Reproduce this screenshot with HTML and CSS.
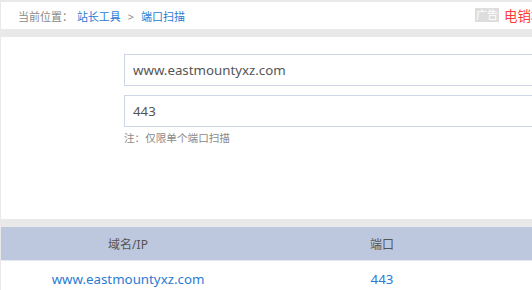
FILE: index.html
```html
<!DOCTYPE html>
<html lang="zh-CN">
  <head>
    <meta charset="UTF-8" />
    <meta name="viewport" content="width=device-width, initial-scale=1.0" />
    <title>端口扫描</title>
    <link rel="stylesheet" href="styles.css">
  </head>

  <body>
    <div class="top-bar">
      <div class="crumbs">
        <span class="crumb-label">当前位置：</span>
        <a href="#">站长工具</a>
        <span class="crumb-sep">&gt;</span>
        <a href="#">端口扫描</a>
      </div>
      <div class="ad">
        <span class="ad-tag">广告</span>
        <a href="#" class="ad-link">电销机</a>
      </div>
    </div>

    <div class="scan-panel">
      <input class="field" type="text" value="www.eastmountyxz.com">
      <input class="field" type="text" value="443">
      <p class="note">注：仅限单个端口扫描</p>
    </div>

    <div class="result">
      <table>
        <thead>
          <tr>
            <th>域名/IP</th>
            <th>端口</th>
            <th></th>
          </tr>
        </thead>
        <tbody>
          <tr>
            <td><a href="#">www.eastmountyxz.com</a></td>
            <td><a href="#">443</a></td>
            <td></td>
          </tr>
        </tbody>
      </table>
    </div>
  </body>
</html>
```

FILE: styles.css
```css
body {
  margin: 0;
  background-color: #e9e9e9;
  font-family: "Noto Sans", "Noto Sans CJK SC", sans-serif;
  overflow: hidden;
}

a {
  color: #2b7bd2;
  text-decoration: none;
}

.top-bar {
  display: flex;
  justify-content: space-between;
  align-items: center;
  height: 27px;
  margin: 2px 0 8px 1px;
  background-color: #fff;
  font-size: 11px;
  white-space: nowrap;
}

.crumbs {
  padding-left: 17px;
  color: #8a8a8a;
}

.crumb-label {
  margin-right: 1px;
}

.crumb-sep {
  margin: 0 4px;
}

.ad {
  display: flex;
  align-items: center;
  gap: 5px;
  width: 57px;
  overflow: hidden;
  flex-shrink: 0;
  margin-top: -1px;
}

.ad-tag {
  padding: 1px 1px;
  background-color: #dddddd;
  color: #fff;
  font-size: 11px;
  line-height: 12px;
}

.ad-link {
  color: #ff3b3b;
  font-size: 13.5px;
}

.scan-panel {
  height: 165px;
  margin-left: 1px;
  padding: 17px 0 0 123px;
  background-color: #fff;
}

.field {
  display: block;
  box-sizing: border-box;
  width: 480px;
  height: 32px;
  margin: 0 0 9px;
  padding: 0 8px;
  border: 1px solid #cfd6e7;
  font-family: inherit;
  font-size: 13.3px;
  color: #555;
  outline: none;
}

.field + .field {
  margin-bottom: 0;
}

.note {
  margin: 3px 0 0;
  font-size: 10.6px;
  color: #8a8a8a;
}

.result {
  margin: 8px 0 0 1px;
  background-color: #fff;
}

table {
  border-collapse: collapse;
  table-layout: fixed;
  width: 762px;
}

th {
  width: 254px;
  height: 33px;
  padding: 0;
  background-color: #bdc8de;
  border-bottom: 1px solid #e6eaf2;
  color: #555;
  font-size: 12px;
  font-weight: normal;
}

td {
  height: 36px;
  padding: 0;
  text-align: center;
  font-size: 13.3px;
}
```
